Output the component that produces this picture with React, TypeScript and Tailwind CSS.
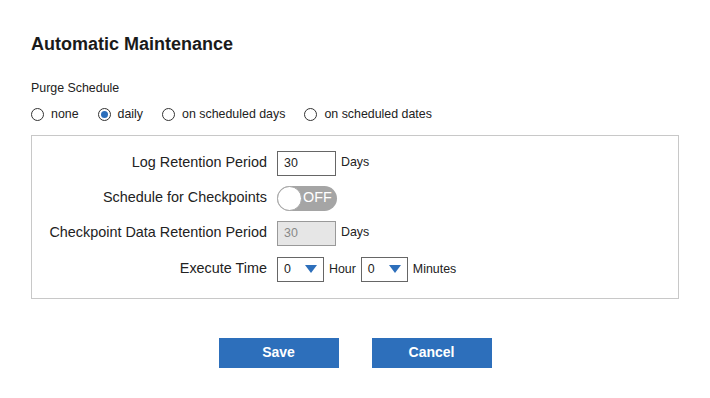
import { useState } from "react";

const FONT = { fontFamily: '"Liberation Sans", Arial, sans-serif' };

function Radio({ label, checked, onClick }: { label: string; checked: boolean; onClick: () => void }) {
  return (
    <label className="flex items-center gap-[7px] cursor-pointer" onClick={onClick}>
      <span className="flex h-[13px] w-[13px] items-center justify-center rounded-full border border-[#333] bg-white">
        {checked && <span className="h-[7px] w-[7px] rounded-full bg-[#2d6fbb]" />}
      </span>
      <span className="text-[12.4px] text-[#222]">{label}</span>
    </label>
  );
}

function Row({ label, children }: { label: string; children: React.ReactNode }) {
  return (
    <div className="flex items-start">
      <div className="flex h-[25px] w-[245px] shrink-0 items-center justify-end pr-[10px] text-[14.4px] text-[#222]">
        {label}
      </div>
      <div className="flex items-start gap-[5px]">{children}</div>
    </div>
  );
}

function Select({ value }: { value: string }) {
  return (
    <div className="flex h-[25px] w-[47px] items-center justify-between border border-[#666] bg-white pl-[6px] pr-[6px] text-[12.4px] text-[#222]">
      <span>{value}</span>
      <svg width="12" height="8" viewBox="0 0 12 8">
        <path d="M0 0 H12 L6 8 Z" fill="#2d6fbb" />
      </svg>
    </div>
  );
}

export default function App() {
  const [schedule, setSchedule] = useState("daily");
  const options = ["none", "daily", "on scheduled days", "on scheduled dates"];

  return (
    <div className="h-[398px] w-[710px] bg-white" style={FONT}>
      <div className="px-[31px] pt-[34px]">
        <h1 className="text-[18px] font-bold leading-[20px] text-[#1a1a1a]">Automatic Maintenance</h1>
        <p className="mt-[27px] text-[12.4px] leading-[14px] text-[#222]">Purge Schedule</p>
        <div className="mt-[10px] flex items-center gap-[19px]">
          {options.map((o) => (
            <Radio key={o} label={o} checked={schedule === o} onClick={() => setSchedule(o)} />
          ))}
        </div>

        <div className="mt-[11px] flex flex-col border border-[#c8c8c8] pt-[15px] pb-[16px]">
          <Row label="Log Retention Period">
            <div className="flex h-[25px] w-[59px] items-center border border-[#666] bg-white pl-[6px] text-[12.4px] text-[#222]">
              30
            </div>
            <span className="pt-[2px] text-[12.4px] text-[#222]">Days</span>
          </Row>
          <div className="mt-[10px]">
            <Row label="Schedule for Checkpoints">
              <div className="flex h-[25px] w-[60px] items-center rounded-full bg-[#a5a5a5]">
                <span className="h-[25px] w-[25px] rounded-full border border-[#a5a5a5] bg-white" />
                <span className="ml-[1px] text-[14.4px] text-white">OFF</span>
              </div>
            </Row>
          </div>
          <div className="mt-[10px]">
            <Row label="Checkpoint Data Retention Period">
              <div className="flex h-[25px] w-[59px] items-center border border-[#999] bg-[#e6e6e6] pl-[6px] text-[12.4px] text-[#888]">
                30
              </div>
              <span className="pt-[2px] text-[12.4px] text-[#222]">Days</span>
            </Row>
          </div>
          <div className="mt-[11px]">
            <Row label="Execute Time">
              <Select value="0" />
              <span className="flex h-[25px] items-center text-[12.4px] text-[#222]">Hour</span>
              <Select value="0" />
              <span className="flex h-[25px] items-center text-[12.4px] text-[#222]">Minutes</span>
            </Row>
          </div>
        </div>

        <div className="mt-[39px] flex justify-center gap-[33px]">
          <button className="h-[30px] w-[120px] bg-[#2d6fbb] text-[14px] font-bold text-white">Save</button>
          <button className="h-[30px] w-[120px] bg-[#2d6fbb] text-[14px] font-bold text-white">Cancel</button>
        </div>
      </div>
    </div>
  );
}
